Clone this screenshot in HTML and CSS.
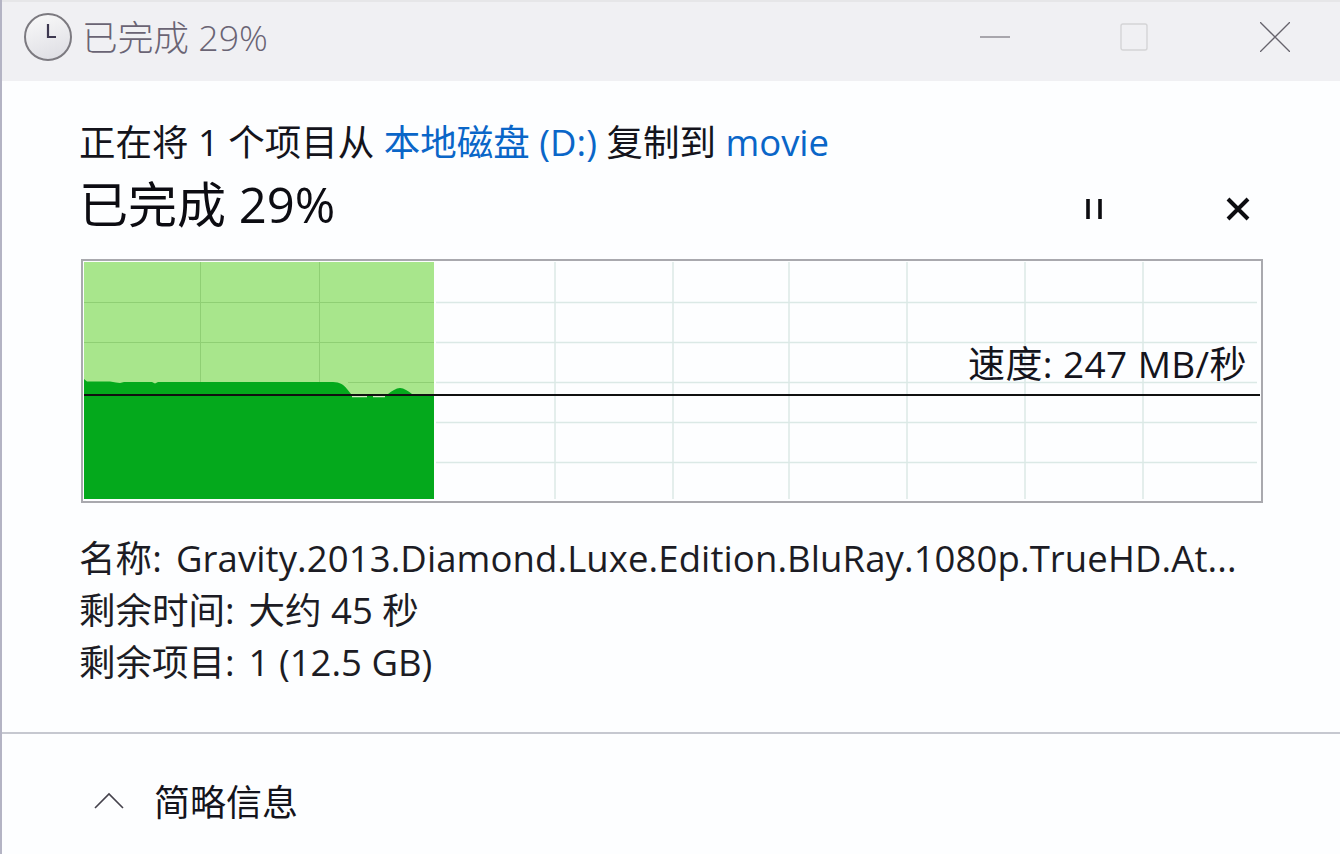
FILE: index.html
```html
<!DOCTYPE html>
<html lang="zh-CN">
<head>
  <meta charset="UTF-8" />
  <title>已完成 29%</title>
  <link rel="stylesheet" href="styles.css">
</head>
<body>
  <div class="window">
    <div class="titlebar">
      <div class="clock">
        <svg viewBox="0 0 46 46" width="46" height="46">
          <path d="M23 10v13h8" fill="none" stroke="#3d3850" stroke-width="2.2"/>
        </svg>
      </div>
      <span class="title-text">已完成 29%</span>
      <div class="win-controls">
        <button class="win-btn">
          <svg viewBox="0 0 30 30" width="30" height="30"><path d="M0 15h30" stroke="#77747c" stroke-width="1.2"/></svg>
        </button>
        <button class="win-btn">
          <svg viewBox="0 0 30 30" width="30" height="30"><rect x="1" y="2" width="26" height="26" rx="2" fill="none" stroke="#d4d4d6" stroke-width="1.4"/></svg>
        </button>
        <button class="win-btn">
          <svg viewBox="0 0 30 30" width="30" height="30"><path d="M0 0l30 30M30 0L0 30" stroke="#66636c" stroke-width="1.3"/></svg>
        </button>
      </div>
    </div>

    <div class="content">
      <div class="copy-line">正在将 1 个项目从 <a href="#">本地磁盘 (D:)</a> 复制到 <a href="#">movie</a></div>
      <div class="status-row">
        <span class="status-text">已完成 29%</span>
        <div class="actions">
          <svg viewBox="0 0 24 24" width="24" height="24"><path d="M6 2v20M18 2v20" stroke="#0c0c10" stroke-width="3.6"/></svg>
          <svg viewBox="0 0 24 24" width="24" height="24"><path d="M2 2l20 20M22 2L2 22" stroke="#0c0c10" stroke-width="4"/></svg>
        </div>
      </div>

      <div class="graph">
        <svg viewBox="81 259 1182 244" width="1182" height="244">
          <rect x="84" y="262" width="350" height="237" fill="#a8e68c"/>
          <g stroke="#dbe9e6" stroke-width="1.5">
            <path d="M555 262v237M673 262v237M789 262v237M907 262v237M1025 262v237M1143 262v237"/>
            <path d="M436 302.500H1257M436 342.500H1257M436 382.500H1257M436 422.500H1257M436 462.500H1257"/>
          </g>
          <g stroke="#8fcf74" stroke-width="1">
            <path d="M200.500 262v122M319.500 262v122M84 302.500h350M84 342.500h350M348 382.500h86"/>
          </g>
          <path d="M84 379L87 381.500H110L116 382.500L120 383L124 382L152 382L155 383.500L158 382L333 382C340 382 344 385 347 389L351 394H388C392 391 396 388 400 388C404 388 408 391 412 394H434V499H84Z" fill="#04a91c"/>
          <path d="M352 396.500h15M373 396.500h12" stroke="#d4f0c4" stroke-width="1.5"/>
          <path d="M84 395h1176" stroke="#101010" stroke-width="2"/>
        </svg>
        <span class="speed">速度: 247 MB/秒</span>
      </div>

      <div class="info">
        <div class="info-line name-line"><span class="label">名称:</span>Gravity.2013.Diamond.Luxe.Edition.BluRay.1080p.TrueHD.At...</div>
        <div class="info-line"><span class="label">剩余时间:</span>大约 45 秒</div>
        <div class="info-line"><span class="label">剩余项目:</span>1 (12.5 GB)</div>
      </div>
    </div>

    <div class="footer">
      <svg viewBox="0 0 30 18" width="30" height="18"><path d="M1 17L15 3l14 14" fill="none" stroke="#45424c" stroke-width="1.6"/></svg>
      <span class="footer-text">简略信息</span>
    </div>
  </div>
</body>
</html>
```

FILE: styles.css
```css
* {
  margin: 0;
  padding: 0;
  box-sizing: border-box;
  font-family: 'Open Sans', 'Noto Sans CJK SC', sans-serif;
}

body {
  width: 1340px;
  height: 854px;
  overflow: hidden;
  background: #fdfdfe;
}

.window {
  height: 854px;
  display: flex;
  flex-direction: column;
  border-left: 2px solid #b4b4c4;
  background: #fdfeff;
}

.titlebar {
  height: 81px;
  flex-shrink: 0;
  display: flex;
  align-items: center;
  padding: 0 0 9px 22px;
  background: #f0f0f3;
  border-top: 2px solid #e6e6e8;
}

.clock {
  width: 48px;
  height: 48px;
  border-radius: 50%;
  border: 2px solid #7c7a80;
  background: linear-gradient(160deg, #fafafa, #dcdce2);
}

.clock svg {
  display: block;
  margin: -1px;
}

.title-text {
  margin: 0 0 4px 10px;
  font-size: 35.7px;
  font-weight: 300;
  color: #6a6474;
}

.win-controls {
  margin-left: auto;
  display: flex;
  gap: 110px;
  padding-right: 50px;
}

.win-btn {
  width: 30px;
  height: 30px;
  border: none;
  background: none;
}

.win-btn svg {
  display: block;
}

.content {
  flex: 1;
  padding: 35px 0 0 77px;
}

.copy-line {
  font-size: 36.5px;
  line-height: 52px;
  color: #14141c;
}

.copy-line a {
  color: #0a66c8;
  text-decoration: none;
}

.status-row {
  display: flex;
  align-items: center;
  width: 1183px;
  height: 64px;
  margin-top: 3px;
}

.status-text {
  margin-bottom: 4px;
  font-size: 49px;
  color: #0c0c12;
}

.actions {
  margin-left: auto;
  display: flex;
  gap: 120px;
  padding: 12px 12px 0 0;
}

.graph {
  position: relative;
  width: 1182px;
  height: 244px;
  margin: 24px 0 0 2px;
  border: 2px solid #a9a9ae;
  background: #fdfeff;
}

.graph svg {
  display: block;
  margin: -2px;
}

.speed {
  position: absolute;
  right: 14px;
  top: 77px;
  font-size: 37px;
  letter-spacing: 0.4px;
  line-height: 52px;
  color: #14141c;
}

.info {
  margin-top: 29px;
}

.info-line {
  font-size: 36.5px;
  line-height: 52px;
  color: #1c1c24;
  white-space: nowrap;
}

.name-line {
  letter-spacing: 0.1px;
}

.label {
  margin-right: 14px;
}

.footer {
  height: 122px;
  flex-shrink: 0;
  display: flex;
  align-items: center;
  padding: 12px 0 0 92px;
  border-top: 2px solid #c6c8d0;
}

.footer-text {
  margin-left: 30px;
  font-size: 36px;
  color: #14141c;
}
```
